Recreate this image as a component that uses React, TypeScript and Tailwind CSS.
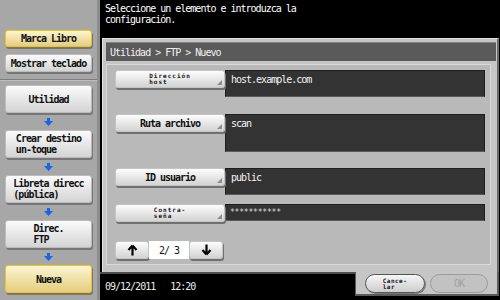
import React from "react";

const BlueArrow = () => (
  <div className="h-[17px] flex items-center justify-center">
    <svg width="9" height="8" viewBox="0 0 9 8">
      <path d="M3 0h3v3h3L4.5 8 0 3h3z" fill="#1a63ea" />
    </svg>
  </div>
);

function SideBtn({
  children,
  yellow,
  h,
}: {
  children: React.ReactNode;
  yellow?: boolean;
  h: string;
}) {
  const base =
    "w-full flex items-center justify-center rounded-[3px] font-bold text-[#111] shadow-[1px_2px_0_#767676] " +
    h;
  const look = yellow
    ? " bg-linear-to-b from-[#fbf5d2] to-[#e6cd7c] border border-[#efc51a]"
    : " bg-linear-to-b from-[#fbfbfb] to-[#d4d4d4] border border-[#bcbcbc]";
  return (
    <div className={base + look}>
      <div className="text-left leading-[11px]">{children}</div>
    </div>
  );
}

const Tri = () => (
  <span className="absolute right-[2px] bottom-[2px] w-0 h-0 border-l-[5px] border-l-transparent border-b-[5px] border-b-[#8c8c8c]" />
);

function FieldBtn({ children, small }: { children: React.ReactNode; small?: boolean }) {
  return (
    <div className="relative w-[110px] h-[18px] shrink-0 flex items-center justify-center rounded-[3px] bg-linear-to-b from-[#fdfdfd] to-[#d3d3d3] border border-[#c4c4c4] shadow-[1px_2px_0_#707070] font-bold text-[#111]">
      {small ? (
        <div className="text-left text-[6px] leading-[6px] tracking-[1px]">{children}</div>
      ) : (
        <div>{children}</div>
      )}
      <Tri />
    </div>
  );
}

function Value({ children, h }: { children: React.ReactNode; h: string }) {
  return (
    <div className={"flex-1 bg-[#333333] border border-[#1e1e1e] border-b-[#5a5a5a] text-[#f4f4f4] pl-[5px] pt-[3px] " + h}>
      {children}
    </div>
  );
}

export default function App() {
  return (
    <div className="w-[500px] h-[300px] flex bg-black overflow-hidden font-['DejaVu_Sans_Mono',monospace] text-[10px] leading-[11px] tracking-[-1px]">
      <aside className="w-[100px] shrink-0 h-full bg-[#a7a7a7] border-r-[3px] border-[#8d8d8d] flex flex-col">
        <div className="h-[79px] px-[5px] pt-[30px] flex flex-col gap-[7px]">
          <SideBtn yellow h="h-[17px]">Marca Libro</SideBtn>
          <SideBtn h="h-[18px]">Mostrar teclado</SideBtn>
        </div>
        <div className="h-px bg-[#7c7c7c]" />
        <div className="h-px bg-[#bdbdbd]" />
        <div className="px-[5px] pt-[4px] flex flex-col">
          <SideBtn h="h-[28px]">Utilidad</SideBtn>
          <BlueArrow />
          <SideBtn h="h-[28px]">
            Crear destino
            <br />
            un-toque
          </SideBtn>
          <BlueArrow />
          <SideBtn h="h-[28px]">
            Libreta direcc
            <br />
            (pública)
          </SideBtn>
          <BlueArrow />
          <SideBtn h="h-[28px]">
            Direc.
            <br />
            FTP
          </SideBtn>
          <BlueArrow />
          <SideBtn yellow h="h-[28px]">Nueva</SideBtn>
        </div>
      </aside>

      <div className="flex-1 flex flex-col">
        <div className="h-[38px] px-[5px] pt-[3px] text-white">
          Seleccione un elemento e introduzca la
          <br />
          configuración.
        </div>

        <div className="ml-[2px] mr-[1px] h-[234px] bg-[#c6c6c6] border-t border-l border-[#e2e2e2] border-r-2 border-r-[#6c6c6c] pt-[3px] pl-[3px] pr-[1px] flex flex-col">
          <div className="h-[19px] bg-[#5a5a5a] border-t border-[#838383] text-[#f2f2f2] pl-[4px] flex items-center">
            Utilidad &gt; FTP &gt; Nuevo
          </div>
          <div className="mt-[3px] mr-[5px] h-[201px] bg-[#b9b9b9] border border-[#dadada] pl-[8px] pt-[5px] pr-[5px] flex flex-col">
            <div className="flex items-start">
              <FieldBtn small>
                Dirección
                <br />
                host
              </FieldBtn>
              <Value h="h-[27px]">host.example.com</Value>
            </div>
            <div className="flex items-start mt-[17px]">
              <FieldBtn>Ruta archivo</FieldBtn>
              <Value h="h-[38px]">scan</Value>
            </div>
            <div className="flex items-start mt-[16px]">
              <FieldBtn>ID usuario</FieldBtn>
              <Value h="h-[27px]">public</Value>
            </div>
            <div className="flex items-start mt-[9px]">
              <FieldBtn small>
                Contra-
                <br />
                seña
              </FieldBtn>
              <div className="flex-1 h-[17px] bg-[#333333] border border-[#1e1e1e] border-b-[#5a5a5a] text-[#dcdcdc] pl-[4px] text-[8px] leading-[15px] tracking-[-0.2px]">
                ***********
              </div>
            </div>
            <div className="flex items-center mt-[19px]">
              <div className="w-[34px] h-[18px] flex items-center justify-center rounded-[3px] bg-linear-to-b from-[#fdfdfd] to-[#d3d3d3] border border-[#c4c4c4] shadow-[1px_2px_0_#707070]">
                <svg width="11" height="12" viewBox="0 0 11 12">
                  <path d="M5.5 1.5L1.5 6M5.5 1.5l4 4.5M5.5 1.5V11.5" stroke="#000" strokeWidth="2.2" fill="none" />
                </svg>
              </div>
              <div className="w-[40px] h-[18px] bg-white flex items-center justify-center text-[#111] whitespace-pre">
                2/ 3
              </div>
              <div className="w-[34px] h-[18px] flex items-center justify-center rounded-[3px] bg-linear-to-b from-[#fdfdfd] to-[#d3d3d3] border border-[#c4c4c4] shadow-[1px_2px_0_#707070]">
                <svg width="11" height="12" viewBox="0 0 11 12">
                  <path d="M5.5 10.5L1.5 6M5.5 10.5l4-4.5M5.5 10.5V0.5" stroke="#000" strokeWidth="2.2" fill="none" />
                </svg>
              </div>
            </div>
          </div>
        </div>

        <div className="flex h-[28px]">
          <div className="w-[255px] border-t-2 border-[#4c4c4c] text-[#ececec] pl-[5px] pt-[7px] whitespace-pre">
            09/12/2011   12:20
          </div>
          <div className="flex-1 mr-[1px] h-[24px] bg-[#c6c6c6] border-r-2 border-b-2 border-[#5a5a5a] border-l border-l-[#5a5a5a] pl-[9px] pt-[2px] flex items-start">
            <div className="w-[60px] h-[19px] rounded-full bg-linear-to-b from-[#f6f6f6] to-[#cdcdcd] border border-[#555] shadow-[1px_1px_0_#7a7a7a] flex items-center justify-center">
              <div className="text-left text-[6px] leading-[6px] tracking-[0.5px] font-bold text-[#111]">
                Cance-
                <br />
                lar
              </div>
            </div>
            <div className="ml-[5px] w-[58px] h-[19px] rounded-full bg-[#c2c2c2] border border-[#9c9c9c] flex items-center justify-center text-[#a2a2a2]">
              OK
            </div>
          </div>
        </div>
      </div>
    </div>
  );
}
